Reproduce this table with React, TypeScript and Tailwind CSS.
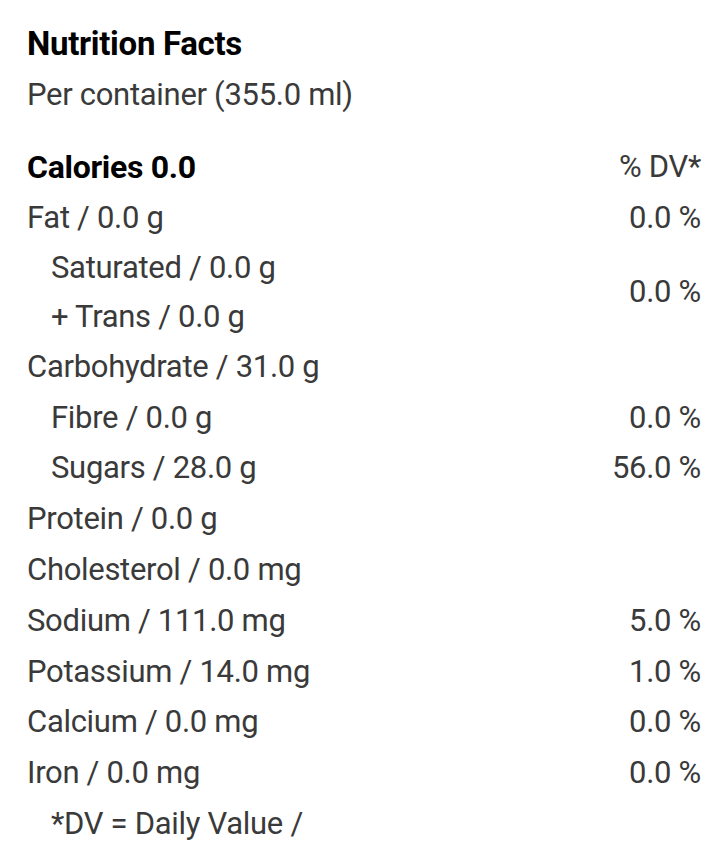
const rows: { label: string; value?: string; indent?: boolean }[] = [
  { label: "Fat / 0.0 g", value: "0.0 %" },
];

const rest: { label: string; value?: string; indent?: boolean }[] = [
  { label: "Carbohydrate / 31.0 g" },
  { label: "Fibre / 0.0 g", value: "0.0 %", indent: true },
  { label: "Sugars / 28.0 g", value: "56.0 %", indent: true },
  { label: "Protein / 0.0 g" },
  { label: "Cholesterol / 0.0 mg" },
  { label: "Sodium / 111.0 mg", value: "5.0 %" },
  { label: "Potassium / 14.0 mg", value: "1.0 %" },
  { label: "Calcium / 0.0 mg", value: "0.0 %" },
  { label: "Iron / 0.0 mg", value: "0.0 %" },
];

function Row({ label, value, indent }: { label: string; value?: string; indent?: boolean }) {
  return (
    <div className="flex h-[50.8px] items-center justify-between">
      <span className={indent ? "pl-6" : ""}>{label}</span>
      {value && <span>{value}</span>}
    </div>
  );
}

export default function App() {
  return (
    <div className="min-h-screen bg-white pl-[27px] pr-[19px] pt-[24px] font-['Roboto',sans-serif] text-[31px] tracking-[-0.3px] text-[#3a3a3a]">
      <h2 className="h-[40px] text-[33px] font-bold leading-[40px] text-black">Nutrition Facts</h2>
      <p className="mt-[11px] leading-[40px]">Per container (355.0 ml)</p>

      <div className="mt-[27px]">
        <div className="flex h-[50.8px] items-center justify-between">
          <span className="text-[32px] font-bold text-black">Calories 0.0</span>
          <span>% DV*</span>
        </div>
        {rows.map((r) => (
          <Row key={r.label} {...r} />
        ))}
        {/* saturated + trans share one %DV */}
        <div className="flex items-center justify-between">
          <div className="pl-6">
            <div className="flex h-[49px] items-center">Saturated / 0.0 g</div>
            <div className="flex h-[49px] items-center">+ Trans / 0.0 g</div>
          </div>
          <span>0.0 %</span>
        </div>
        {rest.map((r) => (
          <Row key={r.label} {...r} />
        ))}
        <div className="flex h-[50.8px] items-center pl-6">*DV = Daily Value /</div>
      </div>
    </div>
  );
}
